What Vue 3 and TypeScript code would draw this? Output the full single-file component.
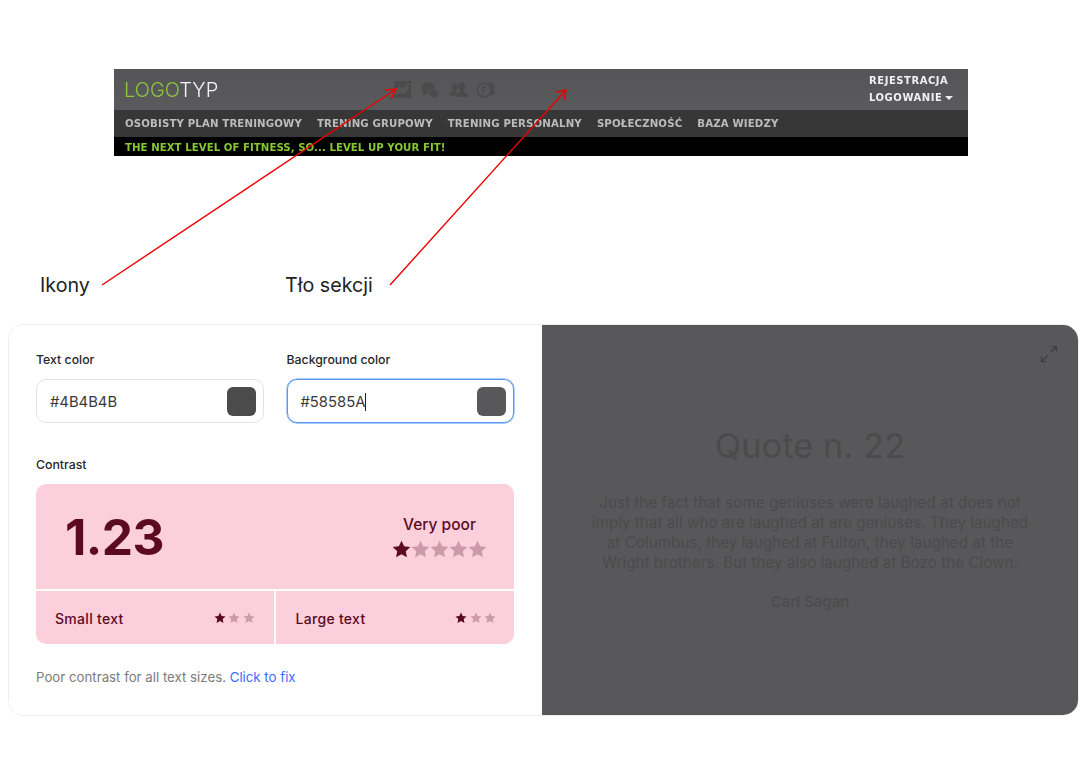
<script setup lang="ts">
const navItems: string[] = ['OSOBISTY PLAN TRENINGOWY', 'TRENING GRUPOWY', 'TRENING PERSONALNY', 'SPOŁECZNOŚĆ', 'BAZA WIEDZY']
const star = '8,0.6 10.2,5.3 15.4,5.9 11.6,9.4 12.6,14.6 8,12 3.4,14.6 4.4,9.4 0.6,5.9 5.8,5.3'
const bigStars: boolean[] = [true, false, false, false, false]
const smallStars: boolean[] = [true, false, false]
</script>

<template>
  <div class="page">
    <header class="site">
      <div class="top">
        <div class="logo"><span class="logo-green">LOGO</span>TYP</div>
        <div class="icons">
          <svg width="17" height="17" viewBox="0 0 18 18">
            <rect width="18" height="18" fill="#4b4b4b" />
            <path d="M1 12 L6 7 L9 10 L16 3 M1 15 L6 10.5 L9 13 L16 7" fill="none" stroke="#626264" stroke-width="1.2" />
          </svg>
          <svg width="18" height="18" viewBox="0 0 19 19">
            <path d="M8 1 C3.5 1 0.5 4 0.5 8 C0.5 10 1.3 11.5 2.5 12.6 L2 15.5 L5 14 C5.8 14.3 6.5 14.4 7 14.5 C6.4 10.5 10 7 15 8 C14.6 4 11.6 1 8 1 Z" fill="#4b4b4b" />
            <path d="M13 9 C10.3 9 8.2 10.8 8.2 13 C8.2 15.2 10.3 17 13 17 L16.5 18.6 L16 16 C17.5 15.2 18.4 14.2 18.4 13 C18.4 10.8 15.8 9 13 9 Z" fill="#4b4b4b" />
          </svg>
          <svg width="19" height="17" viewBox="0 0 20 18">
            <path d="M6 3 C8 3 9 4.6 9 6.5 C9 8 8.4 9.2 7.6 10 L7.6 11.2 L8.6 11.8 C7.3 12.8 6.5 14.2 6.4 16 L0.5 16 L0.5 13.5 C0.5 12.3 3.8 11.5 4.4 11 L4.4 10 C3.6 9.2 3 8 3 6.5 C3 4.6 4 3 6 3 Z" fill="#4b4b4b" />
            <path d="M13.5 1.5 C16 1.5 17.4 3.4 17.4 5.8 C17.4 7.6 16.7 9.1 15.6 10 L15.6 11.2 C16.6 12 19.6 12.6 19.6 14.2 L19.6 17 L7.8 17 L7.8 14.2 C7.8 12.6 10.8 12 11.6 11.2 L11.6 10 C10.5 9.1 9.8 7.6 9.8 5.8 C9.8 3.4 11.2 1.5 13.5 1.5 Z" fill="#4b4b4b" />
          </svg>
          <svg class="icon-last" width="18" height="16" viewBox="0 0 18 16">
            <circle cx="13.5" cy="4.5" r="4" fill="#4b4b4b" />
            <circle cx="14.5" cy="10" r="3.2" fill="#4b4b4b" />
            <circle cx="7" cy="8" r="7.4" fill="#58585a" />
            <circle cx="7" cy="8" r="6.8" fill="none" stroke="#4b4b4b" stroke-width="1.8" />
            <path d="M5.5 11.5 V5 H9.5 M5.5 8 H8.5" fill="none" stroke="#4b4b4b" stroke-width="1.5" />
          </svg>
        </div>
        <div class="account">
          <span>REJESTRACJA</span>
          <span class="login">LOGOWANIE <i class="caret"></i></span>
        </div>
      </div>
      <nav class="nav">
        <span v-for="item in navItems" :key="item">{{ item }}</span>
      </nav>
      <div class="tagline">THE NEXT LEVEL OF FITNESS, SO... LEVEL UP YOUR FIT!</div>
    </header>

    <div class="notes">
      <span class="note note-icons">Ikony</span>
      <span class="note">Tło sekcji</span>
    </div>

    <section class="card">
      <div class="panel">
        <div class="fields">
          <div class="field">
            <label>Text color</label>
            <div class="input">
              <span class="value">#4B4B4B</span>
              <span class="swatch swatch-text"></span>
            </div>
          </div>
          <div class="field">
            <label>Background color</label>
            <div class="input focused">
              <span class="value">#58585A<i class="cursor"></i></span>
              <span class="swatch swatch-bg"></span>
            </div>
          </div>
        </div>

        <label class="contrast-label">Contrast</label>
        <div class="contrast">
          <div class="overall">
            <span class="ratio">1.23</span>
            <div class="rating">
              <span class="rating-text">Very poor</span>
              <div class="stars big">
                <svg v-for="(on, i) in bigStars" :key="i" width="19" height="19" viewBox="0 0 16 16">
                  <polygon :points="star" :fill="on ? '#5c0a22' : '#cc9aaa'" />
                </svg>
              </div>
            </div>
          </div>
          <div class="sizes">
            <div class="size size-small">
              <span>Small text</span>
              <div class="stars">
                <svg v-for="(on, i) in smallStars" :key="i" width="12" height="12" viewBox="0 0 16 16">
                  <polygon :points="star" :fill="on ? '#5c0a22' : '#cc9aaa'" />
                </svg>
              </div>
            </div>
            <div class="size size-large">
              <span>Large text</span>
              <div class="stars">
                <svg v-for="(on, i) in smallStars" :key="i" width="12" height="12" viewBox="0 0 16 16">
                  <polygon :points="star" :fill="on ? '#5c0a22' : '#cc9aaa'" />
                </svg>
              </div>
            </div>
          </div>
        </div>
        <p class="hint">Poor contrast for all text sizes. <a>Click to fix</a></p>
      </div>

      <div class="preview">
        <svg class="expand" width="18" height="18" viewBox="0 0 18 18">
          <path d="M10.5 7.5 L16.5 1.5 M11.5 1.5 H16.5 V6.5 M7.5 10.5 L1.5 16.5 M1.5 11.5 V16.5 H6.5" fill="none" stroke="#3c3c3e" stroke-width="1.2" />
        </svg>
        <h2>Quote n. 22</h2>
        <p class="quote">Just the fact that some geniuses were laughed at does not imply that all who are laughed at are geniuses. They laughed at Columbus, they laughed at Fulton, they laughed at the Wright brothers. But they also laughed at Bozo the Clown.</p>
        <p class="author">Carl Sagan</p>
      </div>
    </section>

    <svg class="arrows" width="1082" height="300" viewBox="0 0 1082 300">
      <g fill="none" stroke="#ee0000" stroke-width="1.4">
        <path d="M102 285 L396 89 M385 90 L396 89 L391 99" />
        <path d="M390 285 L566 90 M556 92 L566 90 L564 100" />
      </g>
    </svg>
  </div>
</template>

<style>
html, body { margin: 0; background: #fff; }
</style>

<style scoped>
.page {
  position: relative;
  width: 1082px;
  height: 767px;
  padding-top: 69px;
  box-sizing: border-box;
  font-family: Inter, "Liberation Sans", sans-serif;
  overflow: hidden;
}
.site {
  width: 854px;
  height: 87px;
  margin-left: 114px;
  display: flex;
  flex-direction: column;
  font-family: "DejaVu Sans", sans-serif;
  font-weight: 700;
  filter: blur(0.3px);
}
.top {
  height: 41px;
  background: linear-gradient(#555557, #5a5a5c);
  display: flex;
  align-items: center;
  position: relative;
}
.logo {
  margin-left: 10px;
  width: 270px;
  font-family: Inter, sans-serif;
  font-weight: 300;
  font-size: 20px;
  color: #f4f4f4;
}
.logo-green { color: #8dc63f; }
.icons { display: flex; align-items: center; gap: 10px; }
.icon-last { margin-left: -1px; }
.account {
  margin-left: auto;
  width: 99px;
  display: flex;
  flex-direction: column;
  gap: 3px;
  font-size: 10px;
  line-height: 14px;
  letter-spacing: 0.55px;
  color: #f0f0f0;
}
.login { display: flex; align-items: center; gap: 3px; }
.caret {
  width: 0;
  height: 0;
  border-left: 4px solid transparent;
  border-right: 4px solid transparent;
  border-top: 4px solid #f0f0f0;
}
.nav {
  height: 27px;
  background: #373737;
  display: flex;
  align-items: center;
  gap: 15px;
  padding-left: 11px;
  font-size: 10.2px;
  letter-spacing: 0.14px;
  color: #bcbcbc;
}
.tagline {
  height: 19px;
  background: #000;
  padding-left: 11px;
  font-size: 10.2px;
  letter-spacing: 0.04px;
  line-height: 22px;
  color: #86c832;
}
.notes {
  display: flex;
  margin-top: 117px;
  padding-left: 40px;
  height: 24px;
  align-items: center;
}
.note { font-size: 19.7px; color: #222; }
.note-icons { width: 245px; }
.card {
  margin: 27px 0 0 8px;
  width: 1071px;
  height: 392px;
  box-sizing: border-box;
  display: flex;
  border: 1px solid #ededed;
  border-radius: 16px;
  overflow: hidden;
}
.panel {
  width: 533px;
  box-sizing: border-box;
  padding: 27px 28px 0 27px;
  background: #fff;
}
.fields { display: flex; gap: 23px; }
.field { flex: 1; }
label {
  display: block;
  font-size: 12.3px;
  line-height: 16px;
  font-weight: 500;
  color: #27272a;
}
.input {
  margin-top: 11px;
  height: 44px;
  box-sizing: border-box;
  border: 1px solid #e2e2e2;
  border-radius: 10px;
  display: flex;
  align-items: center;
  justify-content: space-between;
  padding: 0 7px 0 13px;
}
.input.focused { border-color: #5b96f5; box-shadow: 0 0 0 0.5px #5b96f5; }
.value { font-size: 14.8px; padding-top: 2px; color: #3a3a3a; display: flex; align-items: center; }
.cursor { width: 1px; height: 18px; background: #222; }
.swatch { width: 29px; height: 29px; border-radius: 6px; }
.swatch-text { background: #4b4b4b; }
.swatch-bg { background: #58585a; }
.contrast-label { margin-top: 34px; }
.contrast {
  margin-top: 11px;
  width: 478px;
  height: 160px;
  border-radius: 10px;
  overflow: hidden;
  display: flex;
  flex-direction: column;
  gap: 2px;
  color: #5c0a22;
}
.overall {
  height: 105px;
  background: #fbcfdb;
  display: flex;
  align-items: center;
  justify-content: space-between;
  padding: 0 27px 0 29px;
}
.ratio { font-size: 49.6px; font-weight: 700; letter-spacing: -0.6px; }
.rating { display: flex; flex-direction: column; align-items: center; gap: 6px; }
.rating-text { font-size: 15.5px; font-weight: 500; }
.stars { display: flex; align-items: center; gap: 2.5px; }
.stars.big { gap: 0; }
.sizes { flex: 1; display: flex; gap: 2px; }
.size {
  background: #fbcfdb;
  display: flex;
  align-items: center;
  justify-content: space-between;
  padding-top: 1px;
  font-size: 14px;
  font-weight: 500;
  letter-spacing: 0.3px;
}
.size-small { width: 237.5px; padding-left: 19px; padding-right: 19px; box-sizing: border-box; }
.size-large { flex: 1; padding-left: 20px; padding-right: 18px; }
.hint { margin: 25px 0 0; font-size: 13.25px; line-height: 16px; color: #7c7c7c; }
.hint a { color: #3b6cff; }
.preview {
  flex: 1;
  position: relative;
  background: #58585a;
  color: #4b4b4b;
  text-align: center;
  padding: 100px 48px 0;
}
.expand { position: absolute; top: 20px; right: 20px; }
h2 { margin: 0; font-size: 34.5px; line-height: 42px; font-weight: 400; }
.quote { margin: 26px -5px 0; font-size: 15.25px; line-height: 20px; }
.author { margin: 19px 0 0; font-size: 15px; line-height: 20px; font-weight: 500; }
.arrows { position: absolute; left: 0; top: 0; pointer-events: none; }
</style>
